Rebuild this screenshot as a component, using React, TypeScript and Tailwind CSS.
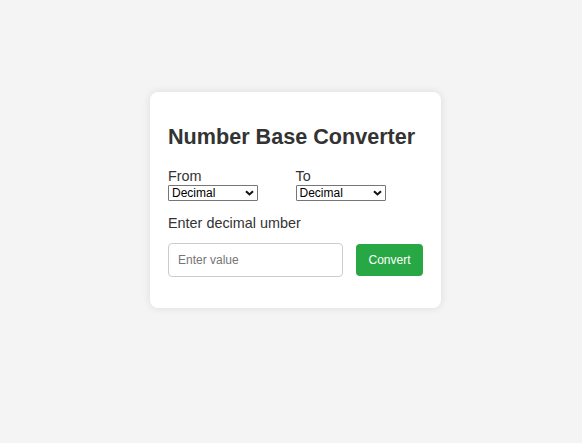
import React, { useState } from "react";

const bases = ["Binary", "Decimal", "Octal", "Hexadecimal"];

function BaseSelect({
  value,
  onChange,
}: {
  value: string;
  onChange: (v: string) => void;
}) {
  return (
    <div className="relative w-[90px]">
      <select
        value={value}
        onChange={(e) => onChange(e.target.value)}
        className="block h-[16px] w-full appearance-none rounded-[1px] border border-[#767676] bg-white pl-[3px] text-[12px] leading-[14px] text-black outline-none"
      >
        {bases.map((b) => (
          <option key={b} value={b}>
            {b}
          </option>
        ))}
      </select>
      {/* chevron like the native arrow */}
      <svg
        className="pointer-events-none absolute right-[4px] top-[5px]"
        width="9"
        height="6"
        viewBox="0 0 9 6"
        fill="none"
      >
        <path d="M1 1.2l3.5 3.3 3.5-3.3" stroke="#111" strokeWidth="2" />
      </svg>
    </div>
  );
}

export default function App() {
  const [from, setFrom] = useState("Decimal");
  const [to, setTo] = useState("Decimal");
  const [value, setValue] = useState("");

  return (
    <div
      className="min-h-screen bg-[#f4f4f4] pl-[150px] pt-[92px]"
      style={{ fontFamily: '"Liberation Sans", Arial, sans-serif' }}
    >
      <div className="w-[291px] rounded-[8px] bg-white px-[18px] pb-[18px] pt-[18px] shadow-[0_0_9px_rgba(0,0,0,0.1)]">
        <h2 className="mt-[14px] text-[21.6px] font-bold leading-[25px] text-[#333]">
          Number Base Converter
        </h2>

        {/* base selectors */}
        <div className="mt-[18px] flex">
          <div className="w-1/2">
            <label className="block text-[14.4px] leading-[18px] text-[#333]">From</label>
            <BaseSelect value={from} onChange={setFrom} />
          </div>
          <div className="w-1/2">
            <label className="block text-[14.4px] leading-[18px] text-[#333]">To</label>
            <BaseSelect value={to} onChange={setTo} />
          </div>
        </div>

        <p className="mt-[12.5px] text-[14.4px] leading-[18px] text-[#333]">
          Enter {from.toLowerCase()} umber
        </p>

        <div className="mb-[13px] mt-[11px] flex items-center gap-[13px]">
          <input
            type="text"
            value={value}
            onChange={(e) => setValue(e.target.value)}
            placeholder="Enter value"
            className="h-[34px] flex-1 rounded-[4px] border border-[#ccc] pl-[9px] text-[12px] text-[#333] outline-none placeholder:text-[#757575]"
          />
          <button className="h-[32px] w-[67px] rounded-[4px] bg-[#28a745] text-[12px] text-white">
            Convert
          </button>
        </div>
      </div>
    </div>
  );
}
